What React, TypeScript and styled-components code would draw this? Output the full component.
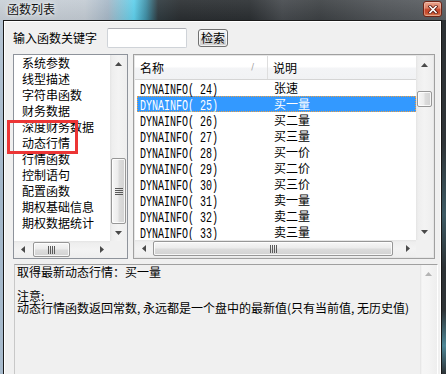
import React from "react";
import styled, { createGlobalStyle } from "styled-components";

const GlobalStyle = createGlobalStyle`
  html, body { margin: 0; padding: 0; }
  body { background: #2b2f33; font-family: "Noto Sans CJK SC", "Noto Sans", sans-serif; font-size: 12px; }
  *, *::before, *::after { box-sizing: border-box; }
`;

const Window = styled.div`
  position: relative;
  width: 446px;
  height: 374px;
  overflow: hidden;
  display: flex;
  flex-direction: column;
  font-family: "Noto Sans CJK SC", "Noto Sans", sans-serif;
  font-size: 12px;
  color: #000;
`;

const TitleBar = styled.div`
  flex: none;
  height: 20px;
  display: flex;
  align-items: flex-start;
  justify-content: space-between;
  padding: 0 4px 0 7px;
  background:
    linear-gradient(180deg, rgba(255,255,255,0.08), rgba(0,0,0,0.05)),
    linear-gradient(90deg, #c9d0d7 0px, #c3cbd3 85px, #a7b8c7 108px, #7cc6dc 124px, #5fd0ec 134px, #3f8fa6 146px, #2f3a3f 158px, #2a2e31 180px, #2b2f32 250px, #45494d 282px, #3d4144 320px, #4f5357 380px, #5b5f63 446px);
`;

const Title = styled.span`
  margin-top: 1px;
  line-height: 16px;
  font-size: 12px;
  color: #121212;
  text-shadow: 0 0 6px rgba(255, 255, 255, 0.9), 0 0 3px rgba(255, 255, 255, 0.7);
`;

const CloseBtn = styled.div`
  width: 19px;
  height: 16px;
  margin-top: 1px;
  border: 1px solid #6e2416;
  border-radius: 3px;
  background: linear-gradient(180deg, #eaa58f 0%, #dd8065 42%, #c5442a 55%, #c84e2e 80%, #dd8a5e 100%);
  box-shadow: inset 0 0 0 1px rgba(255, 255, 255, 0.3);
  display: flex;
  align-items: center;
  justify-content: center;
`;

const Frame = styled.div`
  flex: 1;
  display: flex;
  min-height: 0;
`;

const LeftEdge = styled.div`
  flex: none;
  width: 3px;
  background: linear-gradient(180deg, #b5c4d3 0%, #a3b7ca 50%, #a8bbcd 100%);
`;

const RightEdge = styled.div`
  flex: none;
  width: 4px;
  background: linear-gradient(180deg, #2d3134 0%, #2f3437 35%, #3d5a64 55%, #2c3134 70%, #2e3336 82%, #4e8797 92%, #2d3236 100%);
`;

const Client = styled.div`
  flex: 1;
  min-width: 0;
  border: 1px solid #1a1a1a;
  border-bottom: none;
  background: #f0f0f0;
  box-shadow: inset -1px 0 0 #ffffff, inset 1px 1px 0 #ffffff;
  display: flex;
  flex-direction: column;
  padding: 7px 0 0 9px;
`;

const SearchRow = styled.div`
  flex: none;
  height: 20px;
  display: flex;
  align-items: center;
`;

const Label = styled.span`
  line-height: 16px;
  margin-right: 10px;
`;

const SearchInput = styled.div`
  width: 80px;
  height: 20px;
  background: #fff;
  border: 1px solid #cfd3d8;
  border-top-color: #abadb3;
  border-radius: 2px;
  margin-right: 11px;
`;

const Button = styled.div`
  width: 30px;
  height: 18px;
  border: 1px solid #707070;
  border-radius: 3px;
  background: linear-gradient(180deg, #f4f4f4 0%, #ebebeb 48%, #dddddd 52%, #cfcfcf 100%);
  box-shadow: inset 0 0 0 1px rgba(255, 255, 255, 0.7);
  display: flex;
  align-items: center;
  justify-content: center;
  line-height: 14px;
`;

const ListsRow = styled.div`
  flex: none;
  height: 205px;
  margin-top: 6px;
  display: flex;
  gap: 5px;
`;

const LeftList = styled.div`
  width: 115px;
  border: 1px solid #8e939b;
  background: #fff;
  display: grid;
  grid-template-columns: 1fr 17px;
  grid-template-rows: 1fr 17px;
  overflow: hidden;
`;

const RightList = styled.div`
  width: 302px;
  border: 1px solid #a0a0a0;
  padding: 1px;
  background: #fff;
  box-shadow: inset 0 0 0 1px #e6e6e6;
  display: grid;
  grid-template-columns: 1fr 17px;
  grid-template-rows: 1fr 17px;
  overflow: hidden;
`;

const ItemsPane = styled.div`
  overflow: hidden;
  min-width: 0;
  min-height: 0;
`;

const Item = styled.div`
  height: 16px;
  line-height: 16px;
  padding-left: 8px;
  white-space: nowrap;
`;

const Header = styled.div`
  height: 24px;
  display: grid;
  grid-template-columns: 133px 1fr;
  background: linear-gradient(180deg, #ffffff 0%, #ffffff 45%, #f3f4f6 55%, #f1f2f4 100%);
  border-bottom: 1px solid #d5d5d5;
`;

const HeaderCell = styled.div<{ $divider?: boolean }>`
  display: flex;
  align-items: center;
  justify-content: space-between;
  padding: 0 13px 0 5px;
  line-height: 16px;
  border-right: ${(p) => (p.$divider ? "1px solid #dedede" : "none")};
`;

const SortMark = styled.span`
  font-family: "DejaVu Sans", sans-serif;
  font-size: 8px;
  color: #9a9a9a;
`;

const Row = styled.div<{ $selected?: boolean }>`
  height: 16px;
  margin-left: 2px;
  display: grid;
  grid-template-columns: 137px 1fr;
  align-items: center;
  background: ${(p) => (p.$selected ? "#3399ff" : "transparent")};
  color: ${(p) => (p.$selected ? "#ffffff" : "#000000")};
  outline: ${(p) => (p.$selected ? "1px dotted #f0a040" : "none")};
  outline-offset: -1px;
`;

const NameCell = styled.div`
  padding-left: 3px;
  height: 16px;
  overflow: visible;
  white-space: nowrap;
`;

const NameText = styled.span`
  display: inline-block;
  font-family: "Liberation Mono", monospace;
  font-size: 14px;
  line-height: 16px;
  white-space: pre;
  transform: scaleX(0.714);
  transform-origin: left center;
`;

const DescCell = styled.div`
  line-height: 16px;
  white-space: nowrap;
`;

const VScroll = styled.div`
  display: flex;
  flex-direction: column;
  background: linear-gradient(90deg, #e4e4e4 0px, #eeeeee 2px, #f3f3f3 50%, #eeeeee 100%);
  overflow: hidden;
`;

const HScroll = styled.div`
  display: flex;
  flex-direction: row;
  background: linear-gradient(180deg, #e4e4e4 0px, #eeeeee 2px, #f3f3f3 50%, #eeeeee 100%);
  overflow: hidden;
`;

const Track = styled.div<{ $vertical?: boolean }>`
  flex: 1;
  display: flex;
  flex-direction: ${(p) => (p.$vertical ? "column" : "row")};
  min-width: 0;
  min-height: 0;
`;

const ArrowBtn = styled.div`
  flex: none;
  width: 17px;
  height: 17px;
  display: flex;
  align-items: center;
  justify-content: center;
`;

const Corner = styled.div`
  background: #f0f0f0;
`;

const VThumb = styled.div<{ $offset: number; $size: number }>`
  flex: none;
  margin: ${(p) => p.$offset}px 1px 0 1px;
  height: ${(p) => p.$size}px;
  border: 1px solid #979797;
  border-radius: 2px;
  background: linear-gradient(90deg, #f7f7f7 0%, #ececec 45%, #dcdcdc 55%, #d2d2d2 100%);
  box-shadow: inset 0 0 0 1px rgba(255, 255, 255, 0.8);
  display: flex;
  align-items: center;
  justify-content: center;
`;

const HThumb = styled.div<{ $offset: number; $size: number }>`
  flex: none;
  margin: 1px 0 1px ${(p) => p.$offset}px;
  width: ${(p) => p.$size}px;
  border: 1px solid #979797;
  border-radius: 2px;
  background: linear-gradient(180deg, #f7f7f7 0%, #ececec 45%, #dcdcdc 55%, #d2d2d2 100%);
  box-shadow: inset 0 0 0 1px rgba(255, 255, 255, 0.8);
  display: flex;
  align-items: center;
  justify-content: center;
`;

const Panel = styled.div`
  flex: 1;
  margin-top: 5px;
  margin-left: 1px;
  width: 424px;
  border-top: 1px solid #a0a0a0;
  border-left: 1px solid #c8c8c8;
  border-right: 1px solid #ffffff;
  display: grid;
  grid-template-columns: 1fr 17px;
  min-height: 0;
`;

const PanelText = styled.div`
  padding: 1px 0 0 2px;
  line-height: 12px;
  white-space: pre-line;
`;

const PanelScroll = styled.div`
  display: flex;
  flex-direction: column;
  background: linear-gradient(90deg, #e2e2e2 0px, #f6f6f6 2px, #f4f4f4 50%, #eeeeee 100%);
`;

const Annotation = styled.div`
  position: absolute;
  left: 7px;
  top: 120px;
  width: 71px;
  height: 34px;
  border: 3px solid #ec3535;
  pointer-events: none;
`;

type Dir = "up" | "down" | "left" | "right";

const Arrow = ({ dir, color = "#4a4a4a" }: { dir: Dir; color?: string }) => {
  const vertical = dir === "up" || dir === "down";
  const pts = {
    up: "0,4 3.5,0 7,4",
    down: "0,0 7,0 3.5,4",
    left: "4,0 4,7 0,3.5",
    right: "0,0 0,7 4,3.5",
  }[dir];
  return (
    <svg width={vertical ? 7 : 4} height={vertical ? 4 : 7} viewBox={vertical ? "0 0 7 4" : "0 0 4 7"}>
      <polygon points={pts} fill={color} />
    </svg>
  );
};

const GripV = () => (
  <svg width="8" height="7" viewBox="0 0 8 7">
    {[0, 2, 4, 6].map((y) => (
      <rect key={y} x="0" y={y} width="8" height="1" fill="#5a5a5a" />
    ))}
  </svg>
);

const GripH = () => (
  <svg width="7" height="8" viewBox="0 0 7 8">
    {[0, 2, 4, 6].map((x) => (
      <rect key={x} x={x} y="0" width="1" height="8" fill="#5a5a5a" />
    ))}
  </svg>
);

const CloseGlyph = () => (
  <svg width="10" height="9" viewBox="0 0 10 9">
    <path d="M2 1.5 L8 7.5 M8 1.5 L2 7.5" stroke="#5a1a10" strokeWidth="3.2" strokeLinecap="square" />
    <path d="M2 1.5 L8 7.5 M8 1.5 L2 7.5" stroke="#ffffff" strokeWidth="1.6" strokeLinecap="square" />
  </svg>
);

const categories = [
  "系统参数",
  "线型描述",
  "字符串函数",
  "财务数据",
  "深度财务数据",
  "动态行情",
  "行情函数",
  "控制语句",
  "配置函数",
  "期权基础信息",
  "期权数据统计",
];

const rows: [string, string][] = [
  ["24", "张速"],
  ["25", "买一量"],
  ["26", "买二量"],
  ["27", "买三量"],
  ["28", "买一价"],
  ["29", "买二价"],
  ["30", "买三价"],
  ["31", "卖一量"],
  ["32", "卖二量"],
  ["33", "卖三量"],
];

const description =
  "取得最新动态行情：买一量\n\n注意:\n动态行情函数返回常数, 永远都是一个盘中的最新值(只有当前值, 无历史值)";

export default function App() {
  return (
    <>
      <GlobalStyle />
      <Window>
        <TitleBar>
          <Title>函数列表</Title>
          <CloseBtn>
            <CloseGlyph />
          </CloseBtn>
        </TitleBar>
        <Frame>
          <LeftEdge />
          <Client>
            <SearchRow>
              <Label>输入函数关键字</Label>
              <SearchInput />
              <Button>检索</Button>
            </SearchRow>
            <ListsRow>
              <LeftList>
                <ItemsPane>
                  {categories.map((c) => (
                    <Item key={c}>{c}</Item>
                  ))}
                </ItemsPane>
                <VScroll>
                  <ArrowBtn>
                    <Arrow dir="up" />
                  </ArrowBtn>
                  <Track $vertical>
                    <VThumb $offset={86} $size={66}>
                      <GripV />
                    </VThumb>
                  </Track>
                  <ArrowBtn>
                    <Arrow dir="down" />
                  </ArrowBtn>
                </VScroll>
                <HScroll>
                  <ArrowBtn>
                    <Arrow dir="left" />
                  </ArrowBtn>
                  <Track>
                    <HThumb $offset={2} $size={37}>
                      <GripH />
                    </HThumb>
                  </Track>
                  <ArrowBtn>
                    <Arrow dir="right" />
                  </ArrowBtn>
                </HScroll>
                <Corner />
              </LeftList>
              <RightList>
                <ItemsPane>
                  <Header>
                    <HeaderCell $divider>
                      <span>名称</span>
                      <SortMark>/</SortMark>
                    </HeaderCell>
                    <HeaderCell>
                      <span>说明</span>
                    </HeaderCell>
                  </Header>
                  {rows.map(([n, d]) => (
                    <Row key={n} $selected={n === "25"}>
                      <NameCell>
                        <NameText>{`DYNAINFO( ${n})`}</NameText>
                      </NameCell>
                      <DescCell>{d}</DescCell>
                    </Row>
                  ))}
                </ItemsPane>
                <VScroll>
                  <ArrowBtn>
                    <Arrow dir="up" />
                  </ArrowBtn>
                  <Track $vertical>
                    <VThumb $offset={18} $size={16} />
                  </Track>
                  <ArrowBtn>
                    <Arrow dir="down" />
                  </ArrowBtn>
                </VScroll>
                <HScroll>
                  <ArrowBtn>
                    <Arrow dir="left" />
                  </ArrowBtn>
                  <Track>
                    <HThumb $offset={1} $size={240}>
                      <GripH />
                    </HThumb>
                  </Track>
                  <ArrowBtn>
                    <Arrow dir="right" />
                  </ArrowBtn>
                </HScroll>
                <Corner />
              </RightList>
            </ListsRow>
            <Panel>
              <PanelText>{description}</PanelText>
              <PanelScroll>
                <ArrowBtn>
                  <Arrow dir="up" color="#b4b4b4" />
                </ArrowBtn>
              </PanelScroll>
            </Panel>
          </Client>
          <RightEdge />
        </Frame>
        <Annotation />
      </Window>
    </>
  );
}
